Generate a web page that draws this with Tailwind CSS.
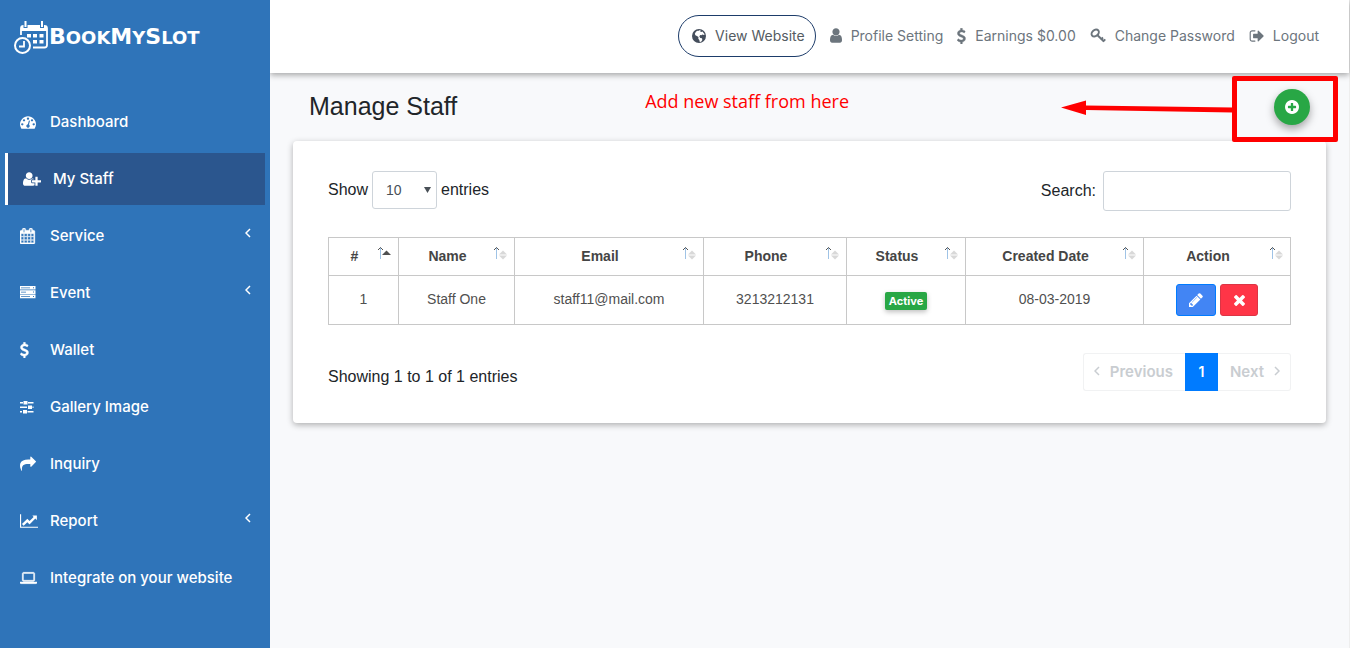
<!DOCTYPE html>
<html lang="en">
<head>
<meta charset="utf-8">
<meta name="viewport" content="width=device-width, initial-scale=1">
<title>Manage Staff - BookMySlot</title>
<script src="https://cdn.jsdelivr.net/npm/@tailwindcss/browser@4"></script>
</head>
<body class="font-['Liberation_Sans',sans-serif] text-base text-[#212529]">
<svg class="hidden" aria-hidden="true">
  <symbol id="dashboard" viewBox="0 0 1792 1792"><path d="M384 1152q0-53-37.5-90.5t-90.5-37.5-90.5 37.5-37.5 90.5 37.5 90.5 90.5 37.5 90.5-37.5 37.5-90.5zm192-448q0-53-37.5-90.5t-90.5-37.5-90.5 37.5-37.5 90.5 37.5 90.5 90.5 37.5 90.5-37.5 37.5-90.5zm428 481l101-382q6-26-7.5-48.5t-38.5-29.5-48 6.5-30 39.5l-101 382q-60 5-107 43.5t-63 98.5q-20 77 20 146t117 89 146-20 89-117q16-60-6-117t-72-91zm660-33q0-53-37.5-90.5t-90.5-37.5-90.5 37.5-37.5 90.5 37.5 90.5 90.5 37.5 90.5-37.5 37.5-90.5zm-640-640q0-53-37.5-90.5t-90.5-37.5-90.5 37.5-37.5 90.5 37.5 90.5 90.5 37.5 90.5-37.5 37.5-90.5zm448 192q0-53-37.5-90.5t-90.5-37.5-90.5 37.5-37.5 90.5 37.5 90.5 90.5 37.5 90.5-37.5 37.5-90.5zm320 448q0 261-141 483-19 29-54 29h-1402q-35 0-54-29-141-221-141-483 0-182 71-348t191-286 286-191 348-71 348 71 286 191 191 286 71 348z"/></symbol>
  <symbol id="user-plus" viewBox="0 0 2048 1792"><path d="M704 896q-159 0-271.5-112.5t-112.5-271.5 112.5-271.5 271.5-112.5 271.5 112.5 112.5 271.5-112.5 271.5-271.5 112.5zm960 128h352q13 0 22.5 9.5t9.5 22.5v192q0 13-9.5 22.5t-22.5 9.5h-352v352q0 13-9.5 22.5t-22.5 9.5h-192q-13 0-22.5-9.5t-9.5-22.5v-352h-352q-13 0-22.5-9.5t-9.5-22.5v-192q0-13 9.5-22.5t22.5-9.5h352v-352q0-13 9.5-22.5t22.5-9.5h192q13 0 22.5 9.5t9.5 22.5v352zm-736 224q0 52 38 90t90 38h256v238q-68 50-171 50h-874q-121 0-194-69t-73-190q0-53 3.5-103.5t14-109 26.5-108.5 43-97.5 62-81 85.5-53.5 111.5-20q19 0 39 17 79 61 154.5 91.5t164.5 30.5 164.5-30.5 154.5-91.5q20-17 39-17 132 0 217 96h-223q-52 0-90 38t-38 90v192z"/></symbol>
  <symbol id="calendar" viewBox="64 0 1792 1792"><path stroke="currentColor" stroke-width="40" d="M192 1664h288v-288h-288v288zm352 0h320v-288h-320v288zm-352-352h288v-320h-288v320zm352 0h320v-320h-320v320zm-352-384h288v-288h-288v288zm736 736h320v-288h-320v288zm-384-736h320v-288h-320v288zm768 736h288v-288h-288v288zm-384-352h320v-320h-320v320zm-352-864v-288q0-13-9.5-22.5t-22.5-9.5h-64q-13 0-22.5 9.5t-9.5 22.5v288q0 13 9.5 22.5t22.5 9.5h64q13 0 22.5-9.5t9.5-22.5zm736 864h288v-320h-288v320zm-384-384h320v-288h-320v288zm384 0h288v-288h-288v288zm32-480v-288q0-13-9.5-22.5t-22.5-9.5h-64q-13 0-22.5 9.5t-9.5 22.5v288q0 13 9.5 22.5t22.5 9.5h64q13 0 22.5-9.5t9.5-22.5zm384-64v1280q0 52-38 90t-90 38h-1408q-52 0-90-38t-38-90v-1280q0-52 38-90t90-38h128v-96q0-66 47-113t113-47h64q66 0 113 47t47 113v96h384v-96q0-66 47-113t113-47h64q66 0 113 47t47 113v96h128q52 0 90 38t38 90z"/></symbol>
  <symbol id="server" viewBox="0 0 16 16"><path fill-rule="evenodd" d="M0 1h15.500v3.600H0zM1 2.500v.8h9v-.8zM13 2.300h1v1h-1zM0 5.300h15.500v3.600H0zM1 6.800v.6h5v-.6zM13 6.600h1v1h-1zM0 9.600h15.500v3.600H0zM1 11v.8h9V11zM13 11h1v1h-1z"/></symbol>
  <symbol id="dollar" viewBox="400 0 1024 1792"><path d="M1362 1185q0 153-99.5 263.5t-258.5 136.5v175q0 14-9 23t-23 9h-135q-13 0-22.5-9.5t-9.5-22.5v-175q-66-9-127.5-31t-101.5-44.5-74-48-46.5-37.5-17.5-18q-17-21-2-41l103-135q7-10 23-12 15-2 24 9l2 2q113 99 243 125 37 8 74 8 81 0 142.5-43t61.5-122q0-28-15-53t-33.5-42-58.5-37.5-66-32-80-32.5q-39-16-61.5-25t-61.5-26.5-62.5-31-56.5-35.5-53.5-42.5-43.5-49-35.5-58-21-66.5-8.5-78q0-138 98-242t255-134v-180q0-13 9.5-22.5t22.5-9.5h135q14 0 23 9t9 23v176q57 6 110.5 23t87 33.5 63.5 37.5 39 29 15 14q17 18 5 38l-81 146q-8 15-23 16-14 3-27-7-3-3-14.5-12t-39-26.5-58.5-32-74.5-26-85.5-11.5q-95 0-155 43t-60 111q0 26 8.5 48t29.5 41.5 39.5 33 56 31 60.5 27 70 27.5q53 20 81 31.5t76 35 75.5 42.5 62 50 53 63.5 31.5 76.5 13 94z" stroke="currentColor" stroke-width="50"/></symbol>
  <symbol id="sliders" viewBox="0 0 16 16"><path d="M0 3h3v1.500H0zM8 3h5.500v1.500H8zM3.500 2h4v3.500h-4zM0 7.500h7v1.500H0zM12.500 7.500h1v1.500h-1zM8 6.500h4v3.500H8zM0 12h2v1.500H0zM7.500 12h6v1.500h-6zM3 11h4v3.500H3z"/></symbol>
  <symbol id="share" viewBox="0 0 1792 1792"><path d="M1792 640q0 26-19 45l-512 512q-19 19-45 19t-45-19-19-45v-256h-224q-98 0-175.500 6t-154 21.500-133 42.500-105.500 69.500-80 101-48.500 138.500-17.500 181q0 55 5 123 0 6 2.500 23.500t2.500 26.500q0 15-8.500 25t-23.500 10q-16 0-28-17-7-9-13-22t-13.500-30-10.500-24q-127-285-127-451 0-199 53-333 162-403 875-403h224v-256q0-26 19-45t45-19 45 19l512 512q19 19 19 45z"/></symbol>
  <symbol id="chart" viewBox="0 0 2048 1792"><path d="M2048 1536v128h-2048v-1536h128v1408h1920zm-128-1248v435q0 21-19.500 29.500t-35.500-7.500l-121-121-633 633q-10 10-23 10t-23-10l-233-233-416 416-192-192 585-585q10-10 23-10t23 10l233 233 464-464-121-121q-16-16-7.500-35.500t29.500-19.500h435q14 0 23 9t9 23z"/></symbol>
  <symbol id="laptop" viewBox="0 0 1920 1792"><path stroke="currentColor" stroke-width="50" d="M416 1280q-66 0-113-47t-47-113v-704q0-66 47-113t113-47h1088q66 0 113 47t47 113v704q0 66-47 113t-113 47h-1088zm-32-864v704q0 13 9.500 22.500t22.500 9.500h1088q13 0 22.500-9.500t9.500-22.500v-704q0-13-9.500-22.500t-22.500-9.500h-1088q-13 0-22.500 9.500t-9.500 22.500zm1376 928h160v96q0 40-47 68t-113 28h-1600q-66 0-113-28t-47-68v-96h1760z"/></symbol>
  <symbol id="globe" viewBox="0 0 16 16"><path fill-rule="evenodd" d="M8 1a7 7 0 1 0 0 14A7 7 0 0 0 8 1zM8.600 2.300l1.200.3-.6 1 .9.500 1.300-.6 2.300 2.700-.8.900-1.500-.5-1 .7-1.200-.2-.9 1.300 1 1.500 1.700.4.300 1.800-1.200 1.600-1.300.3-.5-2-1-1.200.2-1.700-1.600-1.200-1.500-.6-.6-1.500 1-1.700 1.300-1.300 1.200.3.500-.6z"/></symbol>
  <symbol id="user" viewBox="256 100 1280 1600"><path d="M1536 1399q0 109-62.500 187t-150.500 78h-854q-88 0-150.500-78t-62.500-187q0-85 8.500-160.500t31.500-152 58.500-131 94-89 134.500-34.500q131 128 313 128t313-128q76 0 134.500 34.500t94 89 58.500 131 31.500 152 8.500 160.500zm-256-887q0 159-112.500 271.500t-271.500 112.500-271.500-112.500-112.500-271.500 112.500-271.500 271.500-112.500 271.500 112.500 112.500 271.500z"/></symbol>
  <symbol id="key" viewBox="0 0 16 16"><g fill="none" stroke="currentColor"><ellipse cx="5.200" cy="5" rx="4" ry="3" stroke-width="2" transform="rotate(-40 5.200 5)"/><path d="M7.500 7.300l6.500 6.200" stroke-width="2"/><path d="M11 11.500l2-2 M13 13.500l2.300-2.200" stroke-width="1.800"/></g></symbol>
  <symbol id="signout" viewBox="0 0 1664 1792"><path d="M704 1440q0 4 1 20t.5 26.500-3 23.500-10 19.500-20.500 6.500h-320q-119 0-203.500-84.500t-84.500-203.500v-704q0-119 84.500-203.500t203.500-84.500h320q13 0 22.500 9.500t9.500 22.500q0 4 1 20t.5 26.500-3 23.500-10 19.500-20.500 6.500h-320q-66 0-113 47t-47 113v704q0 66 47 113t113 47h312l11.500 1 11.500 3 8 5.500 7 9 2 13.500zm928-544q0 26-19 45l-544 544q-19 19-45 19t-45-19-19-45v-288h-448q-26 0-45-19t-19-45v-384q0-26 19-45t45-19h448v-288q0-26 19-45t45-19 45 19l544 544q19 19 19 45z"/></symbol>
  <symbol id="pencil" viewBox="128 128 1536 1536"><path d="M491 1536l91-91-235-235-91 91v107h128v128h107zm523-928q0-22-22-22-10 0-17 7l-542 542q-7 7-7 17 0 22 22 22 10 0 17-7l542-542q7-7 7-17zm-54-192l416 416-832 832h-416v-416zm683 96q0 53-37 90l-166 166-416-416 166-165q36-38 90-38 53 0 91 38l235 234q37 39 37 91z"/></symbol>
  <symbol id="times" viewBox="302 366 1188 1188"><path d="M1490 1322q0 40-28 68l-136 136q-28 28-68 28t-68-28l-294-294-294 294q-28 28-68 28t-68-28l-136-136q-28-28-28-68t28-68l294-294-294-294q-28-28-28-68t28-68l136-136q28-28 68-28t68 28l294 294 294-294q28-28 68-28t68 28l136 136q28 28 28 68t-28 68l-294 294 294 294q28 28 28 68z"/></symbol>
  <symbol id="plus-circle" viewBox="128 128 1536 1536"><path d="M1344 960v-128q0-26-19-45t-45-19h-256v-256q0-26-19-45t-45-19h-128q-26 0-45 19t-19 45v256h-256q-26 0-45 19t-19 45v128q0 26 19 45t45 19h256v256q0 26 19 45t45 19h128q26 0 45-19t19-45v-256h256q26 0 45-19t19-45zm320-64q0 209-103 385.500t-279.500 279.500-385.500 103-385.500-103-279.500-279.500-103-385.500 103-385.500 279.500-279.500 385.500-103 385.500 103 279.500 279.500 103 385.500z"/></symbol>
  <symbol id="angle" viewBox="0 0 6 10"><path d="M5 1L1 5l4 4" fill="none" stroke="currentColor" stroke-width="1.500"/></symbol>
  <symbol id="sort" viewBox="0 0 14 14"><path d="M3.500 1.500V13" stroke="#9fc3e6" fill="none"/><path d="M1 4l2.500-2.500L6 4" stroke="#555" fill="none"/><path d="M6 8.500l4-4 4 4zM6 9.500h8l-4 4z" fill="#d8d8d8"/></symbol>
  <symbol id="sort-asc" viewBox="0 0 14 14"><path d="M3.500 1.500V13" stroke="#9fc3e6" fill="none"/><path d="M1 4l2.500-2.500L6 4" stroke="#555" fill="none"/><path d="M5 9l4.500-4.500L14 9z" fill="#505050"/></symbol>
</svg>

<div class="flex min-h-screen">
  <aside class="relative w-[270px] shrink-0 bg-[#2f74b9] text-white font-['Inter',sans-serif]">
    <a href="#" class="flex h-[91px] items-center pb-4 pl-3.5" aria-label="BookMySlot">
      <svg class="h-[34px] w-[35px]" viewBox="0 0 35 34" fill="none" stroke="#fff" aria-hidden="true">
        <path d="M7 14V7.500Q7 5 9.500 5h21Q33 5 33 7.500V24q0 2.500-2.500 2.500H19" stroke-width="1.800"/>
        <path d="M7 5h26v5H7z" fill="#fff" stroke="none"/>
        <path d="M11.500 1v6M28 1v6" stroke="#2f74b9" stroke-width="4"/>
        <path d="M11.500 0v6M28 0v6" stroke-width="2"/>
        <path d="M13 13h4v3.500h-4zM19 13h4v3.500h-4zM25.500 13h4v3.500h-4zM19 19h4v3.500h-4zM25.500 19h4v3.500h-4z" fill="#fff" stroke="none"/>
        <circle cx="8.500" cy="24.500" r="7.500" stroke-width="2"/>
        <path d="M10 20v5.500H5" stroke-width="1.800"/>
      </svg>
      <span class="font-['DejaVu_Sans',sans-serif] text-lg font-bold uppercase"><span class="text-[22px]">B</span>ook<span class="text-[22px]">M</span>y<span class="text-[22px]">S</span>lot</span>
    </a>
    <nav class="flex flex-col gap-[5px] px-[5px] pt-[5px] text-[15px] font-medium">
      <a href="#" class="flex h-[52px] items-center pl-[15px]"><span class="w-[30px]"><svg class="size-4 fill-current"><use href="#dashboard"/></svg></span>Dashboard</a>
      <a href="#" class="flex h-[52px] items-center border-l-[3px] border-white bg-[#2b568e] pl-[15px]"><span class="w-[30px]"><svg class="h-4 w-[18px] fill-current"><use href="#user-plus"/></svg></span>My Staff</a>
      <a href="#" class="flex h-[52px] items-center pl-[15px]"><span class="w-[30px]"><svg class="size-4 fill-current"><use href="#calendar"/></svg></span>Service<svg class="mr-3.5 mb-1.5 ml-auto h-2.5 w-1.5"><use href="#angle"/></svg></a>
      <a href="#" class="flex h-[52px] items-center pl-[15px]"><span class="w-[30px]"><svg class="size-4 fill-current"><use href="#server"/></svg></span>Event<svg class="mr-3.5 mb-1.5 ml-auto h-2.5 w-1.5"><use href="#angle"/></svg></a>
      <a href="#" class="flex h-[52px] items-center pl-[15px]"><span class="w-[30px]"><svg class="h-4 w-[9px] fill-current"><use href="#dollar"/></svg></span>Wallet</a>
      <a href="#" class="flex h-[52px] items-center pl-[15px]"><span class="w-[30px]"><svg class="size-4 fill-current"><use href="#sliders"/></svg></span>Gallery Image</a>
      <a href="#" class="flex h-[52px] items-center pl-[15px]"><span class="w-[30px]"><svg class="size-4 fill-current"><use href="#share"/></svg></span>Inquiry</a>
      <a href="#" class="flex h-[52px] items-center pl-[15px]"><span class="w-[30px]"><svg class="h-4 w-[18px] fill-current"><use href="#chart"/></svg></span>Report<svg class="mr-3.5 mb-1.5 ml-auto h-2.5 w-1.5"><use href="#angle"/></svg></a>
      <a href="#" class="flex h-[52px] items-center pl-[15px]"><span class="w-[30px]"><svg class="h-4 w-[17px] fill-current"><use href="#laptop"/></svg></span>Integrate on your website</a>
    </nav>
  </aside>

  <div class="flex min-w-0 grow flex-col border-r border-[#eeeeee] bg-[#f8f9fb]">
    <header class="flex h-[73px] items-center justify-end gap-3.5 bg-white pr-[30px] pb-0.5 font-['Inter',sans-serif] text-sm text-[#6c757d] shadow-[0_2px_6px_rgba(0,0,0,0.35)]">
      <a href="#" class="flex h-[42px] items-center gap-2 rounded-full border border-[#1d3c6a] px-3 pr-2.5 text-[#545b62]"><svg class="size-4 fill-[#454e5c]"><use href="#globe"/></svg>View Website</a>
      <a href="#" class="flex items-center gap-[9px]"><svg class="h-[15px] w-3 fill-current"><use href="#user"/></svg>Profile Setting</a>
      <a href="#" class="flex items-center gap-[9px]"><svg class="h-4 w-[9px] fill-current"><use href="#dollar"/></svg>Earnings $0.00</a>
      <a href="#" class="flex items-center gap-[9px]"><svg class="size-4"><use href="#key"/></svg>Change Password</a>
      <a href="#" class="flex items-center gap-[9px]"><svg class="h-4 w-[15px] fill-current"><use href="#signout"/></svg>Logout</a>
    </header>

    <main class="px-[23px]">
      <div class="relative flex h-[68px] items-center justify-between pr-4 pl-4">
        <h1 class="text-[25px]">Manage Staff</h1>
        <button type="button" aria-label="Add staff" class="flex size-9 items-center justify-center rounded-full bg-[#28a745] shadow-[0_4px_9px_rgba(0,0,0,0.35)]"><svg class="size-3.5 fill-white"><use href="#plus-circle"/></svg></button>
        <!-- Help callout pointing at the add button -->
        <p class="absolute top-3.5 right-[477px] font-['Open_Sans',sans-serif] text-lg leading-7 whitespace-nowrap text-[#ff0000]">Add new staff from here</p>
        <svg class="absolute top-[26px] right-[93px] h-5 w-[172px] fill-[#ff0000]" viewBox="0 0 172 20" aria-hidden="true"><path d="M0 8.500L25 1.500V6.500L172 8.500V13.500L25 11V16z"/></svg>
        <div class="pointer-events-none absolute top-[3px] -right-3 h-[66px] w-[106px] rounded-xs border-5 border-[#ff0000]"></div>
      </div>

      <section class="rounded bg-white px-[35px] pt-[30px] pb-8 shadow-[0_2px_6px_rgba(0,0,0,0.3)]">
        <div class="flex items-start justify-between">
          <label class="flex items-center gap-1">Show
            <span class="relative">
              <select class="h-[38px] w-[65px] appearance-none rounded-[3px] border border-[#ced4da] bg-white pl-[13px] text-sm text-[#495057]"><option>10</option></select>
              <svg class="pointer-events-none absolute top-4 right-1.5 h-1.5 w-[7px] fill-[#495057]" viewBox="0 0 7 6" aria-hidden="true"><path d="M0 0h7L3.500 6z"/></svg>
            </span>
            entries</label>
          <label class="flex items-center gap-[7px]">Search: <input type="search" class="h-10 w-[188px] rounded-[3px] border border-[#ced4da] bg-white px-3"></label>
        </div>

        <table class="mt-[26px] w-full table-fixed border-collapse text-center text-sm text-[#505050]">
          <colgroup><col class="w-[70px]"><col class="w-[116px]"><col class="w-[189px]"><col class="w-[143px]"><col class="w-[119px]"><col class="w-[178px]"><col class="w-[147px]"></colgroup>
          <thead>
            <tr class="h-[38px] text-[#454545]">
              <th class="relative border border-[#c8c8c8] pr-[18px] pb-0.5">#<svg class="absolute top-2 right-[7px] size-3.5"><use href="#sort-asc"/></svg></th>
              <th class="relative border border-[#c8c8c8] pr-[18px] pb-0.5">Name<svg class="absolute top-2 right-[7px] size-3.5"><use href="#sort"/></svg></th>
              <th class="relative border border-[#c8c8c8] pr-[18px] pb-0.5">Email<svg class="absolute top-2 right-[7px] size-3.5"><use href="#sort"/></svg></th>
              <th class="relative border border-[#c8c8c8] pr-[18px] pb-0.5">Phone<svg class="absolute top-2 right-[7px] size-3.5"><use href="#sort"/></svg></th>
              <th class="relative border border-[#c8c8c8] pr-[18px] pb-0.5">Status<svg class="absolute top-2 right-[7px] size-3.5"><use href="#sort"/></svg></th>
              <th class="relative border border-[#c8c8c8] pr-[18px] pb-0.5">Created Date<svg class="absolute top-2 right-[7px] size-3.5"><use href="#sort"/></svg></th>
              <th class="relative border border-[#c8c8c8] pr-[18px] pb-0.5">Action<svg class="absolute top-2 right-[7px] size-3.5"><use href="#sort"/></svg></th>
            </tr>
          </thead>
          <tbody>
            <tr class="h-[49px]">
              <td class="border border-[#c8c8c8] pb-0.5">1</td>
              <td class="border border-[#c8c8c8] pb-0.5">Staff One</td>
              <td class="border border-[#c8c8c8] pb-0.5">staff11@mail.com</td>
              <td class="border border-[#c8c8c8] pb-0.5">3213212131</td>
              <td class="border border-[#c8c8c8]"><span class="inline-block rounded-xs bg-[#28a745] px-1 font-['Inter',sans-serif] text-[11px] leading-[18px] font-bold text-white shadow-[0_2px_5px_rgba(0,0,0,0.25)]">Active</span></td>
              <td class="border border-[#c8c8c8] pb-0.5">08-03-2019</td>
              <td class="border border-[#c8c8c8]">
                <div class="flex justify-center gap-1">
                  <button type="button" aria-label="Edit" class="flex h-8 w-10 items-center justify-center rounded-[3px] border border-[#007bff] bg-[#4285f4]"><svg class="size-3.5 fill-white"><use href="#pencil"/></svg></button>
                  <button type="button" aria-label="Delete" class="flex h-8 w-[38px] items-center justify-center rounded-[3px] border border-[#dc3545] bg-[#ff3547]"><svg class="size-[11px] fill-white"><use href="#times"/></svg></button>
                </div>
              </td>
            </tr>
          </tbody>
        </table>

        <div class="mt-7 flex items-center justify-between">
          <p class="pt-2.5">Showing 1 to 1 of 1 entries</p>
          <nav aria-label="Pages" class="flex h-[38px] font-['Inter',sans-serif] text-[15px] font-semibold text-[#c9cdd1]">
            <button type="button" disabled class="flex items-center gap-2.5 rounded-l-[3px] border border-r-0 border-[#f1f2f3] px-2.5 pr-3"><svg class="mb-0.5 h-2.5 w-1.5"><use href="#angle"/></svg>Previous</button>
            <button type="button" class="w-[33px] bg-[#007bff] text-sm text-white">1</button>
            <button type="button" disabled class="flex items-center gap-2.5 rounded-r-[3px] border border-l-0 border-[#f1f2f3] pr-2.5 pl-3">Next<svg class="mb-0.5 h-2.5 w-1.5 rotate-180"><use href="#angle"/></svg></button>
          </nav>
        </div>
      </section>
    </main>
  </div>
</div>
</body>
</html>
